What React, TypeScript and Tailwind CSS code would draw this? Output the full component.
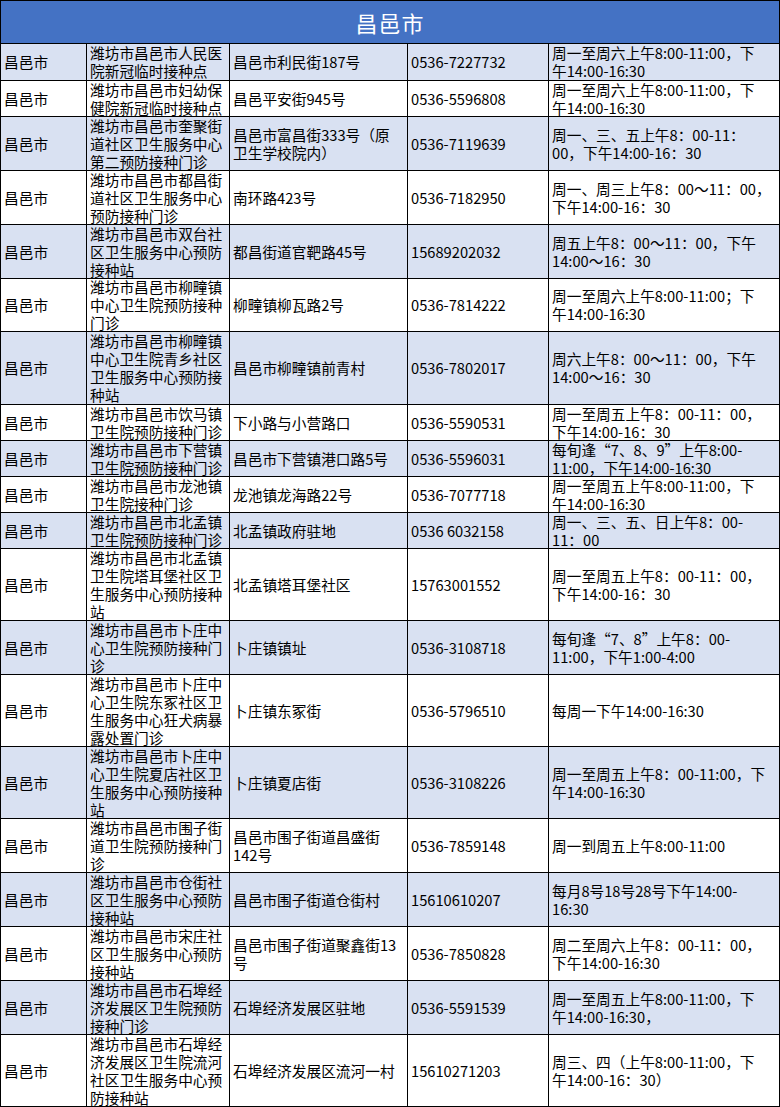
const rows = [
  { h: 'h-[37px]', name: ['潍坊市昌邑市人民医', '院新冠临时接种点'], addr: ['昌邑市利民街187号'], phone: '0536-7227732', time: ['周一至周六上午8:00-11:00，下', '午14:00-16:30'] },
  { h: 'h-[36px]', name: ['潍坊市昌邑市妇幼保', '健院新冠临时接种点'], addr: ['昌邑平安街945号'], phone: '0536-5596808', time: ['周一至周六上午8:00-11:00，下', '午14:00-16:30'] },
  { h: 'h-[54px]', name: ['潍坊市昌邑市奎聚街', '道社区卫生服务中心', '第二预防接种门诊'], addr: ['昌邑市富昌街333号（原', '卫生学校院内）'], phone: '0536-7119639', time: ['周一、三、五上午8：00-11：', '00，下午14:00-16：30'] },
  { h: 'h-[54px]', name: ['潍坊市昌邑市都昌街', '道社区卫生服务中心', '预防接种门诊'], addr: ['南环路423号'], phone: '0536-7182950', time: ['周一、周三上午8：00～11：00，', '下午14:00-16：30'] },
  { h: 'h-[54px]', name: ['潍坊市昌邑市双台社', '区卫生服务中心预防', '接种站'], addr: ['都昌街道官靶路45号'], phone: '15689202032', time: ['周五上午8：00～11：00，下午', '14:00～16：30'] },
  { h: 'h-[53px]', name: ['潍坊市昌邑市柳疃镇', '中心卫生院预防接种', '门诊'], addr: ['柳疃镇柳瓦路2号'], phone: '0536-7814222', time: ['周一至周六上午8:00-11:00；下', '午14:00-16:30'] },
  { h: 'h-[73px]', name: ['潍坊市昌邑市柳疃镇', '中心卫生院青乡社区', '卫生服务中心预防接', '种站'], addr: ['昌邑市柳疃镇前青村'], phone: '0536-7802017', time: ['周六上午8：00～11：00，下午', '14:00～16：30'] },
  { h: 'h-[36px]', name: ['潍坊市昌邑市饮马镇', '卫生院预防接种门诊'], addr: ['下小路与小营路口'], phone: '0536-5590531', time: ['周一至周五上午8：00-11：00，', '下午14:00-16：30'] },
  { h: 'h-[36px]', name: ['潍坊市昌邑市下营镇', '卫生院预防接种门诊'], addr: ['昌邑市下营镇港口路5号'], phone: '0536-5596031', time: ['每旬逢“7、8、9”上午8:00-', '11:00，下午14:00-16:30'] },
  { h: 'h-[36px]', name: ['潍坊市昌邑市龙池镇', '卫生院接种门诊'], addr: ['龙池镇龙海路22号'], phone: '0536-7077718', time: ['周一至周五上午8:00-11:00，下', '午14:00-16:30'] },
  { h: 'h-[36px]', name: ['潍坊市昌邑市北孟镇', '卫生院预防接种门诊'], addr: ['北孟镇政府驻地'], phone: '0536 6032158', time: ['周一、三、五、日上午8：00-', '11：00'] },
  { h: 'h-[72px]', name: ['潍坊市昌邑市北孟镇', '卫生院塔耳堡社区卫', '生服务中心预防接种', '站'], addr: ['北孟镇塔耳堡社区'], phone: '15763001552', time: ['周一至周五上午8：00-11：00，', '下午14:00-16：30'] },
  { h: 'h-[54px]', name: ['潍坊市昌邑市卜庄中', '心卫生院预防接种门', '诊'], addr: ['卜庄镇镇址'], phone: '0536-3108718', time: ['每旬逢“7、8”上午8：00-', '11:00，下午1:00-4:00'] },
  { h: 'h-[72px]', name: ['潍坊市昌邑市卜庄中', '心卫生院东冢社区卫', '生服务中心狂犬病暴', '露处置门诊'], addr: ['卜庄镇东冢街'], phone: '0536-5796510', time: ['每周一下午14:00-16:30'] },
  { h: 'h-[72px]', name: ['潍坊市昌邑市卜庄中', '心卫生院夏店社区卫', '生服务中心预防接种', '站'], addr: ['卜庄镇夏店街'], phone: '0536-3108226', time: ['周一至周五上午8：00-11:00，下', '午14:00-16:30'] },
  { h: 'h-[54px]', name: ['潍坊市昌邑市围子街', '道卫生院预防接种门', '诊'], addr: ['昌邑市围子街道昌盛街', '142号'], phone: '0536-7859148', time: ['周一到周五上午8:00-11:00'] },
  { h: 'h-[54px]', name: ['潍坊市昌邑市仓街社', '区卫生服务中心预防', '接种站'], addr: ['昌邑市围子街道仓街村'], phone: '15610610207', time: ['每月8号18号28号下午14:00-', '16:30'] },
  { h: 'h-[54px]', name: ['潍坊市昌邑市宋庄社', '区卫生服务中心预防', '接种站'], addr: ['昌邑市围子街道聚鑫街13', '号'], phone: '0536-7850828', time: ['周二至周六上午8：00-11：00，', '下午14:00-16:30'] },
  { h: 'h-[54px]', name: ['潍坊市昌邑市石埠经', '济发展区卫生院预防', '接种门诊'], addr: ['石埠经济发展区驻地'], phone: '0536-5591539', time: ['周一至周五上午8:00-11:00，下', '午14:00-16:30，'] },
  { h: 'h-[72px]', name: ['潍坊市昌邑市石埠经', '济发展区卫生院流河', '社区卫生服务中心预', '防接种站'], addr: ['石埠经济发展区流河一村'], phone: '15610271203', time: ['周三、四（上午8:00-11:00，下', '午14:00-16：30）'] },
]

function Cell({ w, lines }: { w: string; lines: string[] }) {
  return (
    <div className={`${w} flex flex-col justify-center border-l border-black pl-[3px] overflow-visible`}>
      {lines.map((l, i) => (
        <div key={i} className="whitespace-nowrap leading-[18px]">
          {l}
        </div>
      ))}
    </div>
  )
}

export default function App() {
  return (
    <div className="w-[780px] bg-white text-black text-[14.7px] font-['Noto_Sans_CJK_SC','Noto_Sans',sans-serif]">
      {/* header */}
      <div className="h-[44px] bg-[#4472c4] border border-black flex items-center justify-center">
        <span className="text-white text-[22px] tracking-[1px]">昌邑市</span>
      </div>

      {rows.map((r, i) => (
        <div
          key={i}
          className={`${r.h} flex border-b border-r border-black ${i % 2 === 0 ? 'bg-[#d9e1f2]' : 'bg-white'}`}
        >
          <Cell w="w-[86px]" lines={['昌邑市']} />
          <Cell w="w-[143px]" lines={r.name} />
          <Cell w="w-[178px]" lines={r.addr} />
          <Cell w="w-[141px]" lines={[r.phone]} />
          <Cell w="w-[231px]" lines={r.time} />
        </div>
      ))}
    </div>
  )
}
